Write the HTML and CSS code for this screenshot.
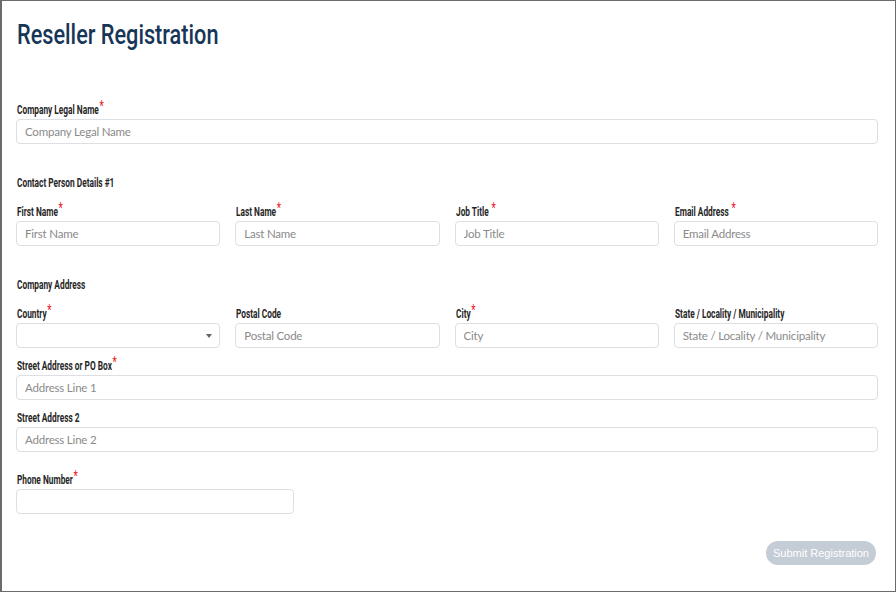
FILE: index.html
```html
<!DOCTYPE html>
<html lang="en">
<head>
    <meta charset="UTF-8">
    <meta name="viewport" content="width=device-width, initial-scale=1.0">
    <title>Reseller Registration</title>
    <link rel="stylesheet" href="styles.css">
</head>
<body>

    <div class="frame">
        <h1 class="title"><span class="narrow">Reseller Registration</span></h1>

        <div class="field">
            <label for="company"><span class="narrow">Company Legal Name<span class="req">*</span></span></label>
            <input class="input" id="company" type="text" placeholder="Company Legal Name">
        </div>

        <h2 class="section"><span class="narrow">Contact Person Details #1</span></h2>
        <div class="row">
            <div class="field">
                <label for="first"><span class="narrow">First Name<span class="req">*</span></span></label>
                <input class="input" id="first" type="text" placeholder="First Name">
            </div>
            <div class="field">
                <label for="last"><span class="narrow">Last Name<span class="req">*</span></span></label>
                <input class="input" id="last" type="text" placeholder="Last Name">
            </div>
            <div class="field">
                <label for="job"><span class="narrow">Job Title <span class="req">*</span></span></label>
                <input class="input" id="job" type="text" placeholder="Job Title">
            </div>
            <div class="field">
                <label for="email"><span class="narrow">Email Address <span class="req">*</span></span></label>
                <input class="input" id="email" type="text" placeholder="Email Address">
            </div>
        </div>

        <h2 class="section"><span class="narrow">Company Address</span></h2>
        <div class="row">
            <div class="field">
                <label for="country"><span class="narrow">Country<span class="req">*</span></span></label>
                <div class="select">
                    <select class="input" id="country"><option></option></select>
                    <span class="caret"></span>
                </div>
            </div>
            <div class="field">
                <label for="postal"><span class="narrow">Postal Code</span></label>
                <input class="input" id="postal" type="text" placeholder="Postal Code">
            </div>
            <div class="field">
                <label for="city"><span class="narrow">City<span class="req">*</span></span></label>
                <input class="input" id="city" type="text" placeholder="City">
            </div>
            <div class="field">
                <label for="state"><span class="narrow">State / Locality / Municipality</span></label>
                <input class="input" id="state" type="text" placeholder="State / Locality / Municipality">
            </div>
        </div>

        <div class="field spaced">
            <label for="street1"><span class="narrow">Street Address or PO Box<span class="req">*</span></span></label>
            <input class="input" id="street1" type="text" placeholder="Address Line 1">
        </div>
        <div class="field spaced">
            <label for="street2"><span class="narrow">Street Address 2</span></label>
            <input class="input" id="street2" type="text" placeholder="Address Line 2">
        </div>

        <div class="field phone">
            <label for="phone"><span class="narrow">Phone Number<span class="req">*</span></span></label>
            <input class="input" id="phone" type="text">
        </div>

        <div class="actions">
            <button class="submit" type="button" disabled>Submit Registration</button>
        </div>
    </div>

</body>
</html>
```

FILE: styles.css
```css
body {
    margin: 0;
    background-color: #fff;
    font-family: 'Lato', 'Open Sans', sans-serif;
}

.frame {
    box-sizing: border-box;
    width: 896px;
    height: 592px;
    border: 1px solid #6b6b6b;
    border-left-width: 2px;
    padding: 0 17px 0 14px;
}

/* no condensed face installed, so squeeze Roboto sideways */
.narrow {
    display: inline-block;
    white-space: nowrap;
    transform-origin: left center;
}

.title {
    margin: 16px 0 0 1px;
    height: 36px;
    font-family: 'Roboto', sans-serif;
    font-weight: 500;
    font-size: 28px;
    line-height: 36px;
    color: #173657;
}

.title .narrow {
    transform: scaleX(0.775);
}

.field label,
.section {
    display: block;
    height: 16px;
    font-family: 'Roboto', sans-serif;
    font-weight: bold;
    font-size: 12.5px;
    line-height: 16px;
    color: #262626;
    margin: 0 0 1px 1px;
}

.field label .narrow,
.section .narrow {
    transform: scaleX(0.665);
}

.title + .field {
    margin-top: 49px;
}

.section {
    margin: 31px 0 13px 1px;
}

.req {
    color: #f0141b;
    font-size: 15px;
    font-weight: normal;
    line-height: 0;
    position: relative;
    top: -3px;
    margin-left: 1px;
}

.input {
    box-sizing: border-box;
    display: block;
    width: 100%;
    height: 25px;
    margin: 0;
    padding: 0 8px;
    border: 1px solid #dcdfe3;
    border-radius: 4px;
    background: #fff;
    font-family: 'Lato', 'Open Sans', sans-serif;
    font-size: 11.5px;
    letter-spacing: -0.2px;
    color: #333;
    outline: none;
}

.input::placeholder {
    color: #8a8a8a;
}

.row {
    display: grid;
    grid-template-columns: repeat(4, 1fr);
    column-gap: 15px;
}

.select {
    position: relative;
}

.select .input {
    appearance: none;
}

.caret {
    position: absolute;
    right: 8px;
    top: 11px;
    border-left: 3.5px solid transparent;
    border-right: 3.5px solid transparent;
    border-top: 4px solid #666;
}

.spaced {
    margin-top: 10px;
}

.phone {
    width: 278px;
    margin-top: 20px;
}

.actions {
    display: flex;
    justify-content: flex-end;
    margin-top: 27px;
    padding-right: 2px;
}

.submit {
    width: 110px;
    height: 24px;
    border: none;
    border-radius: 12px;
    background-color: #c4ccd5;
    color: #fff;
    font-family: 'Liberation Sans', Arial, sans-serif;
    font-size: 11px;
    padding: 0;
}
```
